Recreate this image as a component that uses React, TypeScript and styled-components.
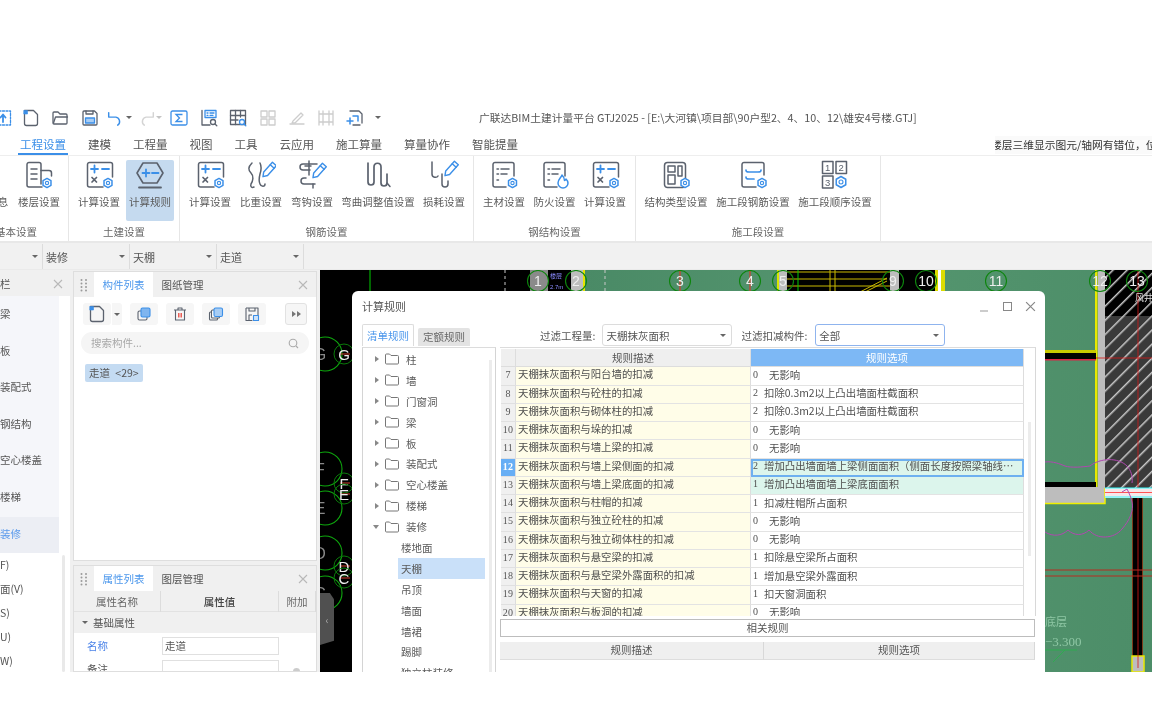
import React from 'react';
import styled, { createGlobalStyle } from 'styled-components';

const GRAY = '#5b626e';
const BLUE = '#3b8fe8';
const FONT = '"Noto Sans CJK SC", "Noto Sans", sans-serif';

const Global = createGlobalStyle`
  html, body { margin: 0; padding: 0; background: #fff; overflow: hidden; }
  * { box-sizing: border-box; }
`;

const Page = styled.div`
  width: 1152px; height: 721px; overflow: hidden; background: #fff;
  font-family: ${FONT}; color: #555; font-size: 10.5px;
  display: flex; flex-direction: column; filter: blur(0.35px);
`;
const TopBlank = styled.div`height: 105px; flex: none;`;
const TitleBar = styled.div`height: 25px; flex: none; display: flex; align-items: center; margin-left: -12px; white-space: nowrap;`;
const Slot = styled.div<{ $w: number }>`width: ${p => p.$w}px; flex: none; display: flex; justify-content: center; align-items: center;`;
const TinyCaret = styled.span<{ $ml?: number; $light?: boolean }>`
  width: 0; height: 0; flex: none; margin-left: ${p => p.$ml ?? 0}px;
  border-left: 3px solid transparent; border-right: 3px solid transparent;
  border-top: 3px solid ${p => (p.$light ? '#c4c4c4' : '#666')};
`;
const Title = styled.div`margin-left: 98px; font-size: 10.75px; color: #555; line-height: 25px;`;

const TabBar = styled.div`height: 26px; flex: none; display: flex; padding-left: 18px; gap: 18px; border-bottom: 1px solid #eee; white-space: nowrap;`;
const Tab = styled.div<{ $active?: boolean }>`
  font-size: 11.5px; line-height: 24px; padding: 2px 2px 0; height: 25px;
  color: ${p => (p.$active ? '#3b8fe8' : '#555')};
  border-bottom: 2px solid ${p => (p.$active ? '#3b8fe8' : 'transparent')};
`;
const Note = styled.div`
  margin-left: auto; width: 157px; height: 18px; margin-top: 6px; overflow: hidden; white-space: nowrap;
  font-size: 10.75px; line-height: 18px; color: #333; text-indent: -4px; background: #fafafa; flex: none;
`;

const Ribbon = styled.div`height: 85px; flex: none; display: flex; background: #fff;`;
const Group = styled.div<{ $w: number; $pl?: number; $gap?: number }>`
  width: ${p => p.$w}px; flex: none; border-right: 1px solid #e6e6e6; display: flex; flex-direction: column;
  & > div:first-child { padding-left: ${p => p.$pl ?? 0}px; gap: ${p => p.$gap ?? 0}px; }
`;
const GroupItems = styled.div`display: flex; height: 68px; padding-top: 4px;`;
const GroupLabel = styled.div<{ $left?: number }>`
  font-size: 10.5px; line-height: 16px; white-space: nowrap; text-align: ${p => (p.$left !== undefined ? 'left' : 'center')};
  margin-left: ${p => p.$left ?? 0}px; color: #666;
`;
const RibbonItem = styled.div<{ $w: number; $active?: boolean }>`
  width: ${p => p.$w}px; flex: none; height: 61px; display: flex; flex-direction: column; align-items: center;
  background: ${p => (p.$active ? '#c5daef' : 'transparent')}; border-radius: 2px; white-space: nowrap;
`;
const RibbonBlank = styled.div`width: 1px; height: 30px; flex: none;`;
const RibbonText = styled.span`font-size: 10.5px; line-height: 14px; margin-top: 5px; color: #5a5a5a;`;

const Strip = styled.div`height: 29px; flex: none; background: #f1f1f1; border-top: 2px solid #e8e8e8; display: flex; padding-top: 1px; border-bottom: 1px solid #eaeaea;`;
const StripCell = styled.div<{ $w: number }>`
  width: ${p => p.$w}px; flex: none; display: flex; align-items: center; justify-content: space-between;
  padding: 0 4px 0 3px; border-right: 1px solid #dcdcdc; font-size: 11px; color: #555;
`;

const Main = styled.div`height: 402px; flex: none; display: flex; background: #f0f0f0; overflow: hidden; gap: 3px;`;
const Sidebar = styled.div`width: 70px; flex: none; background: #fff; display: flex; flex-direction: column; position: relative; margin-top: 1px;`;
const SideHead = styled.div`height: 25px; flex: none; background: #f0f0f0; display: flex; align-items: center; justify-content: space-between; padding-right: 7px; font-size: 10.5px;`;
const SideList = styled.div`width: 59px; flex: none; background: #f5f6fa; display: flex; flex-direction: column; padding-top: 1px;`;
const SideItem = styled.div<{ $active?: boolean }>`
  height: 36.6px; line-height: 34.6px; font-size: 10.5px; white-space: nowrap; overflow: hidden;
  color: ${p => (p.$active ? '#5b9bec' : '#555')}; background: ${p => (p.$active ? '#eceef4' : 'transparent')};
`;
const SubList = styled.div`display: flex; flex-direction: column; position: relative;`;
const SubItem = styled.div`height: 24px; line-height: 24px; font-size: 10.5px; color: #555;`;
const SideScroll = styled.div`position: absolute; left: 62px; top: 284px; bottom: 0; width: 3px; background: #e9e9e9; border-radius: 2px;`;

const PanelCol = styled.div`width: 244px; flex: none; display: flex; flex-direction: column; gap: 4px; padding-top: 1px;`;
const Panel = styled.div<{ $h?: number }>`
  height: ${p => (p.$h ? `${p.$h}px` : 'auto')}; flex: ${p => (p.$h ? 'none' : 1)}; background: #fff;
  border: 1px solid #dedede; display: flex; flex-direction: column; overflow: hidden;
`;
const PanelHead = styled.div`height: 25px; flex: none; background: #f0f0f0; display: flex; align-items: stretch; padding-right: 8px;`;
const Grip = styled.div`width: 20px; flex: none; display: grid; place-items: center;`;
const PTab = styled.div<{ $active?: boolean }>`
  width: 59px; flex: none; text-align: center; line-height: 25px; font-size: 10.5px;
  background: ${p => (p.$active ? '#fff' : 'transparent')}; color: ${p => (p.$active ? '#4b97ec' : '#555')};
`;
const CloseX = styled.div`margin-left: auto; display: grid; place-items: center;`;
const PTools = styled.div`display: flex; gap: 8px; padding: 6px 9px 0; height: 28px; flex: none;`;
const PBtn = styled.div<{ $raised?: boolean; $auto?: boolean }>`
  width: ${p => (p.$raised ? 22 : 28)}px; height: 22px; background: #f6f6f6; border-radius: 3px; display: grid; place-items: center; flex: none;
  margin-left: ${p => (p.$auto ? 'auto' : 0)};
  border: ${p => (p.$raised ? '1px solid #e2e2e2' : 'none')};
`;
const SplitBtn = styled.div`display: flex; gap: 1px; flex: none;`;
const SplitCaret = styled.div`width: 10px; height: 22px; background: #f6f6f6; border-radius: 0 3px 3px 0; display: grid; place-items: center;`;
const Search = styled.div`margin: 7px 7px 0; height: 22px; border-radius: 11px; background: #f5f5f5; display: flex; align-items: center; justify-content: space-between; padding: 0 10px; color: #a8a8a8; font-size: 10.5px; flex: none; line-height: 20px;`;
const Chip = styled.div`margin: 10px 0 0 11px; align-self: flex-start; height: 18px; padding: 0 4px; border-radius: 2px; background: #c4dbf2; font-size: 10.5px; line-height: 17px; color: #555; white-space: nowrap; word-spacing: 3px;`;

const PropHead = styled.div`display: grid; grid-template-columns: 87px 118px 1fr; height: 21px; flex: none; background: #f0f0f0; border-bottom: 1px solid #e2e2e2;`;
const PropHeadCell = styled.div<{ $strong?: boolean }>`text-align: center; line-height: 21px; font-size: 10.5px; border-right: 1px solid #dcdcdc; color: ${p => (p.$strong ? '#444' : '#666')}; font-weight: ${p => (p.$strong ? 500 : 400)};`;
const PropSection = styled.div`height: 21px; flex: none; background: #f0f0f0; display: flex; align-items: center; gap: 5px; padding-left: 8px; font-size: 10.5px;`;
const PropRow = styled.div`display: grid; grid-template-columns: 88px 117px 1fr; height: 21px; flex: none; align-items: center; margin-top: 2px;`;
const PropName = styled.div<{ $blue?: boolean }>`padding-left: 13px; color: ${p => (p.$blue ? '#4b83e8' : '#555')}; font-size: 10.5px;`;
const PropInput = styled.div`height: 18px; border: 1px solid #e0e0e0; padding-left: 2px; line-height: 15px; font-size: 10.5px;`;
const Dot = styled.div`width: 7px; height: 7px; border-radius: 50%; background: #ccc; margin: 6px 0 0 14px;`;

const Canvas = styled.div`flex: 1; position: relative; overflow: hidden; background: #000; min-width: 0;`;
const CanvasArt = styled.svg`display: block; width: 832px; height: 402px;`;
const Handle = styled.div`
  position: absolute; left: 0; top: 323px; width: 14px; height: 52px; background: #505050;
  clip-path: polygon(0 0, 70% 0, 100% 12%, 100% 92%, 0 100%); display: grid; place-items: center; color: #aaa; font-size: 10px;
`;

const Dialog = styled.div`
  position: absolute; left: 32px; top: 21px; width: 693px; height: 400px; background: #fff; border-radius: 6px 6px 0 0;
  padding: 0 10px; display: flex; flex-direction: column;
`;
const DTitle = styled.div`height: 33px; flex: none; display: flex; align-items: center; justify-content: space-between; font-size: 11px; color: #555; padding-bottom: 3px;`;
const WinBtns = styled.div`display: flex; align-items: center; gap: 12px; margin-right: -1px;`;
const DBar = styled.div`height: 22px; flex: none; display: flex; align-items: flex-end;`;
const DTab = styled.div<{ $active?: boolean }>`
  height: ${p => (p.$active ? 22 : 18)}px; width: 52px; text-align: center; font-size: 10.5px; flex: none;
  line-height: ${p => (p.$active ? 22 : 18)}px; margin-right: ${p => (p.$active ? 4 : 0)}px; border-radius: 2px 2px 0 0;
  background: ${p => (p.$active ? '#fff' : '#e3e3e3')}; color: ${p => (p.$active ? '#4b97ec' : '#666')};
  border: ${p => (p.$active ? '1px solid #dcdcdc' : 'none')}; border-bottom: none;
`;
const FilterLabel = styled.div<{ $ml: number }>`margin-left: ${p => p.$ml}px; align-self: center; font-size: 10.5px; color: #555; white-space: nowrap; flex: none;`;
const Select = styled.div<{ $focus?: boolean; $ml: number }>`
  margin-left: ${p => p.$ml}px; width: 130px; height: 22px; flex: none; align-self: center; border-radius: 3px;
  border: 1px solid ${p => (p.$focus ? '#8fb4ee' : '#dcdcdc')};
  display: flex; align-items: center; justify-content: space-between; padding: 0 5px 0 3px; font-size: 10.5px; color: #555; background: #fff;
`;
const DBody = styled.div`flex: 1; display: flex; gap: 4px; min-height: 0; padding-top: 1px;`;
const Tree = styled.div`width: 134px; flex: none; border: 1px solid #d4d4d4; border-bottom: none; border-top: 1px solid #dcdcdc; position: relative; padding-top: 1px; overflow: hidden;`;
const TreeRow = styled.div<{ $sel?: boolean; $child?: boolean }>`
  height: 20.9px; display: flex; align-items: center; font-size: 10.5px; color: #5a5a5a; white-space: nowrap;
  margin-left: ${p => (p.$child ? 35 : 10)}px; width: ${p => (p.$child ? '87px' : 'auto')}; padding-left: ${p => (p.$child ? 3 : 0)}px;
  background: ${p => (p.$sel ? '#c9e0f9' : 'transparent')};
`;
const TreeCaret = styled.span<{ $open?: boolean }>`
  width: 0; height: 0; flex: none; margin-right: 6px;
  ${p => (p.$open
    ? 'border-left:3px solid transparent;border-right:3px solid transparent;border-top:4px solid #888;'
    : 'border-top:3px solid transparent;border-bottom:3px solid transparent;border-left:4px solid #888;margin-left:2px;')}
`;
const TreeName = styled.span`margin-left: 7px;`;
const TreeScroll = styled.div`position: absolute; right: 3px; top: 12px; bottom: 0; width: 3px; background: #ececec;`;

const RulesCol = styled.div`width: 536px; flex: none; display: flex; flex-direction: column; min-height: 0;`;
const GridBox = styled.div`height: 269px; flex: none; border-top: 1px solid #dcdcdc; border-right: 1px solid #d8d8d8; overflow: hidden; position: relative; padding-left: 1px; padding-top: 1px;`;
const RuleGrid = styled.div`display: grid; grid-template-columns: 15px 235px 273px; grid-auto-rows: 18.25px; width: 523px;`;
const Hd = styled.div<{ $blue?: boolean }>`
  background: ${p => (p.$blue ? '#7db8f5' : '#efefef')}; color: ${p => (p.$blue ? '#fff' : '#555')}; text-align: center; line-height: 17px;
  font-size: 10.5px; border-bottom: 1px solid #ddd; border-right: 1px solid #ddd;
`;
const Idx = styled.div<{ $sel?: boolean }>`
  background: ${p => (p.$sel ? '#67aef5' : '#f0f0f0')}; color: ${p => (p.$sel ? '#fff' : '#555')}; text-align: center;
  line-height: 15.5px; font-size: 10px; font-family: "Liberation Serif", serif; font-weight: ${p => (p.$sel ? 700 : 400)};
  border-bottom: 1px solid #e0e0e0; border-right: 1px solid #ddd; letter-spacing: .2px;
`;
const Desc = styled.div`background: #fffde8; padding-left: 2px; line-height: 14px; font-size: 10.4px; border-bottom: 1px solid #e3e3e3; border-right: 1px solid #ddd; white-space: nowrap; color: #4f4f4f;`;
const Opt = styled.div<{ $sel?: boolean; $tint?: boolean }>`
  background: ${p => (p.$sel || p.$tint ? '#dcf5ec' : '#fff')}; display: flex; align-items: center; font-size: 10.4px; white-space: nowrap; color: #4f4f4f;
  border-bottom: 1px solid #e3e3e3; border-right: 1px solid #ddd; overflow: hidden; padding-bottom: 3px;
  ${p => (p.$sel ? 'outline: 2px solid #6eb0f0; outline-offset: -2px; z-index: 1;' : '')}
`;
const OptCode = styled.span<{ $zero?: boolean }>`width: ${p => (p.$zero ? 18 : 13)}px; padding-left: 2px; flex: none; font-family: "Liberation Serif", serif; font-size: 10px;`;
const GridScroll = styled.div`position: absolute; right: 4px; top: 74px; height: 134px; width: 3px; background: #ececec;`;
const Related = styled.div`height: 18px; flex: none; margin-top: 3px; width: 535px; border: 1px solid #bdbdbd; background: #fff; text-align: center; line-height: 16px; font-size: 10.5px; color: #555;`;
const LowerHead = styled.div`display: grid; grid-template-columns: 264px 271px; margin-top: 5px; flex: none; width: 535px;`;
const LowerCell = styled.div`height: 18px; background: #efefef; text-align: center; line-height: 16px; font-size: 10.5px; border-right: 1px solid #d8d8d8; border-bottom: 1px solid #ddd;`;

/* ---------- icons ---------- */
const Gear = ({ x, y, r = 4.6 }: { x: number; y: number; r?: number }) => {
  const pts = Array.from({ length: 6 }, (_, i) => {
    const a = (Math.PI / 3) * i + Math.PI / 6;
    return `${(x + r * Math.cos(a)).toFixed(2)},${(y + r * Math.sin(a)).toFixed(2)}`;
  }).join(' ');
  return (
    <g>
      <polygon points={pts} fill="#fff" stroke={BLUE} strokeWidth="1.5" strokeLinejoin="round" />
      <circle cx={x} cy={y} r={r * 0.36} fill="none" stroke={BLUE} strokeWidth="1.1" />
    </g>
  );
};
const Pencil = ({ x, y }: { x: number; y: number }) => (
  <g transform={`translate(${x} ${y}) rotate(42)`} fill="#fff" stroke={BLUE} strokeWidth="1.4" strokeLinejoin="round">
    <path d="M-2.6 -8h5.2v13L0 9l-2.6-4z" />
    <path d="M-2.6 -4.8h5.2" />
  </g>
);
const Ico = ({ children, size = 30, box = 30 }: { children: React.ReactNode; size?: number; box?: number }) => (
  <svg width={size} height={size} viewBox={`0 0 ${box} ${box}`} fill="none" stroke={GRAY} strokeWidth="1.5" strokeLinecap="round" strokeLinejoin="round">
    {children}
  </svg>
);
const CalcIco = () => (
  <Ico>
    <path d="M19 27H5.5a2 2 0 0 1-2-2V4.5a2 2 0 0 1 2-2h21a2 2 0 0 1 2 2V17" />
    <path d="M7 9h7M10.5 5.500v7M18 9h7" stroke={BLUE} strokeWidth="1.8" />
    <path d="M8 17.500l4.500 4.500M12.500 17.500L8 22" strokeWidth="1.7" />
    <Gear x={24} y={23} />
  </Ico>
);
const RuleIco = () => (
  <Ico>
    <path d="M8 3h14l6 10-6 10H8L2 13z" strokeWidth="1.6" />
    <path d="M7.500 13h7M11 9.500v7M17 13h6.500" stroke={BLUE} strokeWidth="1.8" />
    <path d="M4 27.500h22" strokeWidth="1.8" />
  </Ico>
);
const FloorIco = () => (
  <Ico>
    <path d="M18 27H5a2 2 0 0 1-2-2V4.500a2 2 0 0 1 2-2h10a2 2 0 0 1 2 2V24" />
    <path d="M17 10.500h8a2.500 2.500 0 0 1 2.500 2.500V16" />
    <path d="M7 9h6M7 14h6M7 19h6" />
    <Gear x={23} y={23} />
  </Ico>
);
const WeightIco = () => (
  <Ico>
    <path d="M6 3C2 7 2 10 5 13c3 3 2 8 0 11-1 3 1 4 3 3" />
    <path d="M14 3c2 4 1 8 0 11-1 4-1 8 0 10 1 3 5 3 5 0" />
    <Pencil x={23} y={10} />
  </Ico>
);
const HookIco = () => (
  <Ico>
    <path d="M20 4H6C2 4 2 10 6 10h7M9 18H7c-4 0-4 6 0 6h11" />
    <path d="M12 1v14M8 6h6" />
    <path d="M16 24v4" />
    <Pencil x={22} y={11} />
  </Ico>
);
const BendIco = () => (
  <Ico>
    <path d="M5 3v19c0 4 6 4 6 0V7c0-5 7-5 7 0v16c0 4 6 4 6 0V14" strokeWidth="1.7" />
    <path d="M24 23l3 3.500" />
  </Ico>
);
const LossIco = () => (
  <Ico>
    <path d="M3 2v12c0 4 5 4 6 2" />
    <path d="M13 14v10c0 4 6 4 6 0v-3" />
    <Pencil x={22} y={9} />
  </Ico>
);
const DocLines = ({ fire }: { fire?: boolean }) => (
  <Ico>
    <path d="M17 27H6a2 2 0 0 1-2-2V4.500a2 2 0 0 1 2-2h17a2 2 0 0 1 2 2V16" />
    <path d="M8 9h1.500M12 9h8M8 14h1.500M12 14h6M8 20h1.500" />
    {fire
      ? <path d="M22 15c-1 3-4 4-4 8a5 5 0 0 0 10 0c0-2-1-3-2-4-.5 1-1 1.500-1.500 1.500 0-2-1-4-2.500-5.500z" fill="#fff" stroke={BLUE} />
      : <Gear x={23.5} y={23} />}
  </Ico>
);
const MaterialIco = () => <DocLines />;
const FireIco = () => <DocLines fire />;
const StructIco = () => (
  <Ico>
    <rect x="3.500" y="2.500" width="21" height="25" rx="3" />
    <rect x="7" y="6" width="7" height="6" />
    <rect x="17" y="6" width="4" height="10" />
    <rect x="7" y="15" width="7" height="9" />
    <Gear x={24} y={23} />
  </Ico>
);
const SegRebarIco = () => (
  <Ico>
    <path d="M18 27H6a2 2 0 0 1-2-2V4.500a2 2 0 0 1 2-2h18a2 2 0 0 1 2 2V15" />
    <path d="M8 10c0 2 1 2 3 2h9c2 0 3 0 3-2M8 17c0 2 1 2 3 2h5" stroke={BLUE} strokeWidth="1.7" />
    <Gear x={24} y={23} />
  </Ico>
);
const NumBox = ({ x, y, t }: { x: number; y: number; t: string }) => (
  <g>
    <rect x={x} y={y} width="10.500" height="12" stroke={GRAY} strokeWidth="1.500" />
    <text x={x + 5.2} y={y + 9.5} textAnchor="middle" fontSize="9.500" fontFamily="Liberation Sans" fill={GRAY} stroke="none">{t}</text>
  </g>
);
const SeqIco = () => (
  <Ico>
    <NumBox x={2.5} y={1.5} t="1" />
    <NumBox x={16} y={1.5} t="2" />
    <NumBox x={2.5} y={16} t="3" />
    <Gear x={21} y={22} r={5.5} />
  </Ico>
);

const tb = (c: React.ReactNode, faded?: boolean) => (
  <svg width="20" height="20" viewBox="0 0 20 20" fill="none" stroke={faded ? '#cdcdcd' : GRAY} strokeWidth="1.300" strokeLinecap="round" strokeLinejoin="round">{c}</svg>
);
const TImport = () => tb(<><rect x="2.500" y="3" width="15" height="14" stroke={BLUE} strokeDasharray="2 1.500" /><path d="M10 14V7M7.500 9.500L10 6.500l2.500 3" stroke={BLUE} strokeWidth="1.800" /></>);
const TNew = () => tb(<><path d="M3.500 2.500h9l4 4v9a2 2 0 0 1-2 2h-9a2 2 0 0 1-2-2z" /><path d="M3 2.500h3.500V6H3z" fill={BLUE} stroke={BLUE} strokeWidth=".6" /></>);
const TOpen = () => tb(<><path d="M3 15V5a1 1 0 0 1 1-1h4l2 2h6a1 1 0 0 1 1 1v8a1 1 0 0 1-1 1H4a1 1 0 0 1-1-1z" /><path d="M3.500 15l2-6h12" /></>);
const TSave = () => tb(<><path d="M3 4a1 1 0 0 1 1-1h10.500L17 5.500V16a1 1 0 0 1-1 1H4a1 1 0 0 1-1-1z" /><path d="M6 3v3h7V3" /><rect x="5.500" y="10" width="9" height="5" fill="#a9cdf3" stroke={BLUE} /></>);
const TUndo = ({ f }: { f?: boolean }) => <svg width="18" height="18" viewBox="0 0 20 20" fill="none" stroke={f ? '#d4d4d4' : BLUE} strokeWidth="1.600" strokeLinecap="round" strokeLinejoin="round"><path d="M3 9h8a5 5 0 0 1 2 9M3 4v5h5" transform={f ? 'matrix(-1 0 0 1 20 0)' : undefined} /></svg>;
const TSigma = () => <svg width="20" height="20" viewBox="0 0 20 20" fill="none" stroke={BLUE} strokeWidth="1.300"><rect x="2" y="3" width="16" height="14" rx="1.500" /><path d="M13.500 6.500H7l3.500 3.500L7 13.500h6.500" /></svg>;
const TReport = () => tb(<><path d="M3 2.500V17h8" /><rect x="6" y="2.500" width="11" height="7" stroke={BLUE} /><path d="M8 5h1M11 5h4M8 7.300h1M11 7.300h3" stroke={BLUE} /><circle cx="14" cy="14" r="2.500" /><path d="M16 16l1.800 1.800" /></>);
const TGrid = () => tb(<><rect x="2.500" y="2.500" width="15" height="14" stroke={GRAY} /><path d="M7.500 2.500v14M12.500 2.500V9M2.500 7.500h15M2.500 12H10" /><circle cx="14" cy="14" r="2.500" fill="#fff" stroke={BLUE} /><path d="M16 16l1.800 1.800" stroke={BLUE} /></>);
const TFade1 = () => tb(<><rect x="3" y="3" width="6" height="6" /><rect x="11" y="3" width="6" height="6" /><rect x="3" y="11" width="6" height="6" /><rect x="11" y="11" width="6" height="6" /></>, true);
const TFade2 = () => tb(<><path d="M3 16h14" /><path d="M6 13l8-8 2 2-8 8H5z" /></>, true);
const TFade3 = () => tb(<><path d="M3 3v14M17 3v14M7 3v14M13 3v14M3 6h14M3 14h14" /></>, true);
const TAdd = () => tb(<><path d="M5 3h9l3 3v9M15 17H8" stroke={GRAY} /><path d="M2 13h6M5 10v6M8 8h5v5" stroke={BLUE} strokeWidth="1.500" /></>);

const XIcon = ({ c = '#b8b8b8', s = 10 }: { c?: string; s?: number }) => (
  <svg width={s} height={s} viewBox="0 0 10 10" stroke={c} strokeWidth="1.100"><path d="M1 1l8 8M9 1l-8 8" /></svg>
);
const Dots = () => (
  <svg width="8" height="14" viewBox="0 0 8 14" fill="#9a9a9a"><circle cx="1.500" cy="2" r="1" /><circle cx="6" cy="2" r="1" /><circle cx="1.500" cy="5.500" r="1" /><circle cx="6" cy="5.500" r="1" /><circle cx="1.500" cy="9" r="1" /><circle cx="6" cy="9" r="1" /><circle cx="1.500" cy="12.500" r="1" /><circle cx="6" cy="12.500" r="1" /></svg>
);
const FolderIco = () => (
  <svg width="14" height="12" viewBox="0 0 14 12" fill="none" stroke="#777" strokeWidth="1"><path d="M.5 2a1 1 0 0 1 1-1h3l1.500 1.500h6.500a1 1 0 0 1 1 1v6.500a1 1 0 0 1-1 1h-11a1 1 0 0 1-1-1z" /></svg>
);
const PIco = ({ children }: { children: React.ReactNode }) => (
  <svg width="18" height="18" viewBox="0 0 18 18" fill="none" stroke={GRAY} strokeWidth="1.100" strokeLinejoin="round">{children}</svg>
);

/* ---------- data ---------- */
const ribbon: { w: number; pl: number; gap: number; label: string; left?: number; items: { w: number; t: string; I: React.ComponentType | null; active?: boolean }[] }[] = [
  { w: 69, pl: 0, gap: 8, label: '基本设置', left: -5, items: [{ w: 6, t: '息', I: null }, { w: 50, t: '楼层设置', I: FloorIco }] },
  { w: 111, pl: 5, gap: 2, label: '土建设置', items: [{ w: 50, t: '计算设置', I: CalcIco }, { w: 48, t: '计算规则', I: RuleIco, active: true }] },
  { w: 294, pl: 5, gap: 1, label: '钢筋设置', items: [{ w: 50, t: '计算设置', I: CalcIco }, { w: 50, t: '比重设置', I: WeightIco }, { w: 50, t: '弯钩设置', I: HookIco }, { w: 80, t: '弯曲调整值设置', I: BendIco }, { w: 50, t: '损耗设置', I: LossIco }] },
  { w: 162, pl: 5, gap: 0.5, label: '钢结构设置', items: [{ w: 50, t: '主材设置', I: MaterialIco }, { w: 50, t: '防火设置', I: FireIco }, { w: 50, t: '计算设置', I: CalcIco }] },
  { w: 245, pl: 4, gap: 0, label: '施工段设置', items: [{ w: 72, t: '结构类型设置', I: StructIco }, { w: 82, t: '施工段钢筋设置', I: SegRebarIco }, { w: 82, t: '施工段顺序设置', I: SeqIco }] },
];
const P = '天棚抹灰面积与';
const NONE = '无影响';
const COL = '扣除0.3m2以上凸出墙面柱截面积';
const rows: [number, string, string, string][] = [
  [7, '阳台墙的扣减', '0', NONE], [8, '砼柱的扣减', '2', COL], [9, '砌体柱的扣减', '2', COL], [10, '垛的扣减', '0', NONE],
  [11, '墙上梁的扣减', '0', NONE], [12, '墙上梁侧面的扣减', '2', '增加凸出墙面墙上梁侧面面积（侧面长度按照梁轴线…'],
  [13, '墙上梁底面的扣减', '1', '增加凸出墙面墙上梁底面面积'], [14, '柱帽的扣减', '1', '扣减柱帽所占面积'], [15, '独立砼柱的扣减', '0', NONE],
  [16, '独立砌体柱的扣减', '0', NONE], [17, '悬空梁的扣减', '1', '扣除悬空梁所占面积'], [18, '悬空梁外露面积的扣减', '1', '增加悬空梁外露面积'],
  [19, '天窗的扣减', '1', '扣天窗洞面积'], [20, '板洞的扣减', '0', NONE],
];
const folders = ['柱', '墙', '门窗洞', '梁', '板', '装配式', '空心楼盖', '楼梯'];
const children = ['楼地面', '天棚', '吊顶', '墙面', '墙裙', '踢脚', '独立柱装修'];
const axes: [string, number][] = [['1', 218], ['2', 256], ['3', 360], ['4', 430], ['5', 463], ['9', 573], ['10', 606], ['11', 676], ['12', 780], ['13', 817]];
const bigBubbles: [number, string][] = [[84, 'G'], [199, 'F'], [238, 'E'], [283, 'D'], [323, 'C']];
const smallBubbles: [number, string][] = [[84, 'G'], [213, 'F'], [224, 'E'], [296, 'D'], [308, 'C']];

/* Canvas coordinates: x = page x − 320, y = page y − 270 */
const CanvasDrawing = () => (
  <CanvasArt viewBox="0 0 832 402" role="img" aria-label="drawing">
    <defs>
      <pattern id="hatch" width="10" height="10" patternUnits="userSpaceOnUse" patternTransform="rotate(45)">
        <rect x="0" y="0" width="1.500" height="10" fill="#c9c9c9" />
      </pattern>
      <linearGradient id="grn" x1="0" x2="1" y1="0" y2="0">
        <stop offset="0" stopColor="#4a8a66" /><stop offset=".5" stopColor="#55966f" /><stop offset="1" stopColor="#4c8d68" />
      </linearGradient>
    </defs>
    <rect width="832" height="402" fill="#000" />
    <rect x="263" y="0" width="569" height="402" fill="url(#grn)" />
    <rect x="210" y="0" width="18" height="22" fill="#8a8a8a" />
    <rect x="251" y="0" width="12" height="22" fill="#bdbdbd" />
    <rect x="263" y="0" width="2" height="22" fill="#e5e500" />
    <rect x="457" y="0" width="2" height="22" fill="#d8e800" />
    <rect x="459" y="0" width="8" height="22" fill="#bdbdbd" />
    <rect x="467" y="0" width="103" height="22" fill="#000" />
    <path d="M467 2h103M467 16h103M510 0v22M515 0v22M467 9h100" stroke="#c9b900" strokeWidth="1" />
    <path d="M478 0v22" stroke="#0c0" />
    <path d="M540 22l27-14M545 22l22-11" stroke="#c9b900" />
    <rect x="570" y="0" width="9" height="22" fill="#bdbdbd" />
    <rect x="579" y="0" width="36" height="22" fill="#000" />
    <rect x="615" y="0" width="10" height="22" fill="#dcdc00" />
    <rect x="618" y="0" width="3" height="22" fill="#fff" />
    <text x="230" y="8" fontSize="6" fill="#8c8cff" fontFamily="Noto Sans CJK SC">楼层</text>
    <text x="230" y="19" fontSize="6" fill="#8c8cff" fontFamily="Liberation Sans">2.7m</text>
    <path d="M185 0v22M285 0v22" stroke="#c8c8c8" strokeDasharray="3 3" />
    <path d="M50 0v21" stroke="#0c0" strokeWidth="1" />

    {/* right side of the drawing */}
    <rect x="775" y="0" width="2.500" height="218" fill="#e8e800" />
    <rect x="778" y="0" width="7" height="233" fill="#bdbdbd" />
    <rect x="785" y="0" width="47" height="46" fill="#000" />
    <rect x="785" y="46" width="47" height="172" fill="#3a3a3a" />
    <rect x="785" y="0" width="47" height="218" fill="url(#hatch)" />
    <rect x="725" y="80" width="51" height="3" fill="#c8c800" />
    <rect x="725" y="83" width="51" height="6" fill="#000" />
    <rect x="725" y="89" width="51" height="1.500" fill="#d24" />
    <path d="M776 88h56M818 0v218" stroke="#d81818" strokeWidth=".8" />
    <rect x="725" y="212" width="51" height="5" fill="#000" />
    <rect x="725" y="217" width="60" height="16" fill="#bdbdbd" />
    <path d="M725 233.500h60V218" stroke="#f0f000" strokeWidth="1.500" fill="none" />
    <rect x="785" y="218" width="47" height="10" fill="#f4e8ea" />
    <path d="M785 218h47M785 227h47" stroke="#3ff" strokeWidth="1" />
    <path d="M785 222.500h47" stroke="#f55" strokeWidth="1" />
    <rect x="813" y="228" width="9" height="158" fill="#000" />
    <path d="M812.500 228v158M822.500 228v158" stroke="#7b3a1a" strokeWidth="1" />
    <rect x="812" y="386" width="12" height="16" fill="#bdbdbd" stroke="#e8e800" strokeWidth="1.500" />
    <path d="M725 300h107M725 306h107" stroke="#b82c20" strokeWidth="1.200" />
    <path d="M818 228v170" stroke="#d81818" strokeWidth=".8" />
    <path d="M725 262c8 5 17 4 23-2 6 6 15 6 21 0 8 10 25 9 33-1 8-9 12-19 10-27-1-5-3-9-5-13l-5 3" stroke="#b048b0" strokeWidth="1" fill="none" />
    <path d="M725 192c8-1 15 2 20 4 6 2 18 1 25 0 10-8 28-9 37 0 4 4 6 11 5 17" stroke="#b048b0" strokeWidth="1" fill="none" />
    <text x="725" y="356" fontSize="11" fill="#8fc7a5" fontFamily="Noto Sans CJK SC">底层</text>
    <text x="725" y="376" fontSize="13" fill="#8fc7a5" fontFamily="Liberation Serif">−3.300</text>
    <path d="M725 380h32M733 392l12-12" stroke="#27b34a" strokeWidth=".8" fill="none" />

    {/* axis bubbles along the top */}
    {axes.map(([t, x]) => (
      <g key={t}>
        <path d={`M${x} -1V22`} stroke={x > 340 && x < 440 ? '#d43c2c' : 'none'} strokeWidth="1.200" />
        <circle cx={x} cy="11" r="10.500" fill="none" stroke="#0d850d" strokeWidth="1.100" />
        <text x={x} y="16" textAnchor="middle" fontSize="14" fill="#eee" fontFamily="Liberation Sans">{t}</text>
      </g>
    ))}
    <text x="815" y="31" fontSize="9" fill="#ddd" fontFamily="Noto Sans CJK SC">风井</text>

    {/* axis bubbles on the left */}
    {bigBubbles.map(([y, t]) => (
      <g key={y}>
        <circle cx={5} cy={y} r="17" fill="none" stroke="#0ea80e" strokeWidth="1.100" />
        <text x={0} y={y + 6} textAnchor="middle" fontSize="16" fill="#888" fontFamily="Liberation Sans">{t}</text>
      </g>
    ))}
    {smallBubbles.map(([y, t]) => (
      <g key={y}>
        <path d={`M30 ${y}h-10`} stroke="#d43c2c" strokeWidth="1" />
        <circle cx={24} cy={y} r="10" fill="none" stroke="#0a7a0a" strokeWidth="1" />
        <text x={24} y={y + 6} textAnchor="middle" fontSize="15" fill="#eee" fontFamily="Liberation Sans">{t}</text>
      </g>
    ))}
  </CanvasArt>
);

export default function App() {
  return (
    <Page>
      <Global />
      <TopBlank />
      <TitleBar>
        <Slot $w={30}><TImport /></Slot>
        <Slot $w={26}><TNew /></Slot>
        <Slot $w={32}><TOpen /></Slot>
        <Slot $w={28}><TSave /></Slot>
        <Slot $w={22}><TUndo /></Slot>
        <TinyCaret />
        <Slot $w={30}><TUndo f /></Slot>
        <TinyCaret $ml={-6} $light />
        <Slot $w={34}><TSigma /></Slot>
        <Slot $w={26}><TReport /></Slot>
        <Slot $w={32}><TGrid /></Slot>
        <Slot $w={28}><TFade1 /></Slot>
        <Slot $w={30}><TFade2 /></Slot>
        <Slot $w={28}><TFade3 /></Slot>
        <Slot $w={30}><TAdd /></Slot>
        <TinyCaret $ml={5} />
        <Title>广联达BIM土建计量平台 GTJ2025 - [E:\大河镇\项目部\90户型2、4、10、12\雄安4号楼.GTJ]</Title>
      </TitleBar>
      <TabBar>
        {['工程设置', '建模', '工程量', '视图', '工具', '云应用', '施工算量', '算量协作', '智能提量'].map((t, i) => (
          <Tab key={t} $active={i === 0}>{t}</Tab>
        ))}
        <Note>楼层三维显示图元/轴网有错位，位置</Note>
      </TabBar>
      <Ribbon>
        {ribbon.map(g => (
          <Group key={g.label} $w={g.w} $pl={g.pl} $gap={g.gap}>
            <GroupItems>
              {g.items.map((it, i) => (
                <RibbonItem key={i} $w={it.w} $active={!!it.active}>
                  {it.I ? <it.I /> : <RibbonBlank />}
                  <RibbonText>{it.t}</RibbonText>
                </RibbonItem>
              ))}
            </GroupItems>
            <GroupLabel $left={g.left}>{g.label}</GroupLabel>
          </Group>
        ))}
      </Ribbon>
      <Strip>
        <StripCell $w={43}><span /><TinyCaret /></StripCell>
        <StripCell $w={87}>装修<TinyCaret /></StripCell>
        <StripCell $w={87}>天棚<TinyCaret /></StripCell>
        <StripCell $w={87}>走道<TinyCaret /></StripCell>
      </Strip>
      <Main>
        <Sidebar>
          <SideHead>栏<XIcon /></SideHead>
          <SideList>
            {['梁', '板', '装配式', '钢结构', '空心楼盖', '楼梯'].map(t => <SideItem key={t}>{t}</SideItem>)}
            <SideItem $active>装修</SideItem>
          </SideList>
          <SubList>
            {['F)', '面(V)', 'S)', 'U)', 'W)'].map(t => <SubItem key={t}>{t}</SubItem>)}
          </SubList>
          <SideScroll />
        </Sidebar>
        <PanelCol>
          <Panel>
            <PanelHead>
              <Grip><Dots /></Grip>
              <PTab $active>构件列表</PTab>
              <PTab>图纸管理</PTab>
              <CloseX><XIcon /></CloseX>
            </PanelHead>
            <PTools>
              <SplitBtn>
                <PBtn><TNew /></PBtn>
                <SplitCaret><TinyCaret /></SplitCaret>
              </SplitBtn>
              <PBtn><PIco><rect x="3" y="6" width="9" height="9" rx="1.500" /><rect x="6" y="3" width="9" height="9" rx="1.500" fill="#7fb5ef" stroke={BLUE} /></PIco></PBtn>
              <PBtn><PIco><path d="M3 5h12M7 5V3h4v2M4.500 5v10h9V5" /><path d="M7.800 8v4.500M10.200 8v4.500" stroke="#e8433a" strokeWidth="1.300" /></PIco></PBtn>
              <PBtn><PIco><rect x="2.500" y="7" width="8" height="8" rx="1" /><rect x="4.500" y="5" width="8" height="8" rx="1" fill="#fff" /><rect x="7" y="3" width="8.500" height="8.500" rx="1.500" fill="#a7cdf5" stroke={BLUE} /></PIco></PBtn>
              <PBtn><PIco><path d="M3 3h12v7M9 15.500H3zM3 3v12.500M6 3v3h6V3M6 15v-5h3" /><rect x="10.500" y="10.500" width="5" height="5" stroke={BLUE} fill="#cfe3f9" /></PIco></PBtn>
              <PBtn $raised $auto>
                <svg width="9" height="6" viewBox="0 0 9 6" fill="#777"><path d="M0 0l4 3-4 3zM5 0l4 3-4 3z" /></svg>
              </PBtn>
            </PTools>
            <Search>
              搜索构件...
              <svg width="11" height="11" viewBox="0 0 11 11" fill="none" stroke="#aaa" strokeWidth="1.100"><circle cx="5" cy="5" r="3.800" /><path d="M8 8l2 2" /></svg>
            </Search>
            <Chip>走道 &lt;29&gt;</Chip>
          </Panel>
          <Panel $h={107}>
            <PanelHead>
              <Grip><Dots /></Grip>
              <PTab $active>属性列表</PTab>
              <PTab>图层管理</PTab>
              <CloseX><XIcon /></CloseX>
            </PanelHead>
            <PropHead>
              <PropHeadCell>属性名称</PropHeadCell>
              <PropHeadCell $strong>属性值</PropHeadCell>
              <PropHeadCell>附加</PropHeadCell>
            </PropHead>
            <PropSection><TinyCaret />基础属性</PropSection>
            <PropRow>
              <PropName $blue>名称</PropName>
              <PropInput>走道</PropInput>
            </PropRow>
            <PropRow>
              <PropName>备注</PropName>
              <PropInput />
              <Dot />
            </PropRow>
          </Panel>
        </PanelCol>
        <Canvas>
          <CanvasDrawing />
          <Handle>‹</Handle>
          <Dialog>
            <DTitle>
              计算规则
              <WinBtns>
                <svg width="11" height="11" viewBox="0 0 11 11" stroke="#999" strokeWidth="1"><path d="M1 10h8" /></svg>
                <svg width="11" height="11" viewBox="0 0 11 11" fill="none" stroke="#888" strokeWidth="1"><rect x="1.500" y="1.500" width="8" height="8" /></svg>
                <XIcon c="#888" s={11} />
              </WinBtns>
            </DTitle>
            <DBar>
              <DTab $active>清单规则</DTab>
              <DTab>定额规则</DTab>
              <FilterLabel $ml={70}>过滤工程量:</FilterLabel>
              <Select $ml={7}>天棚抹灰面积<TinyCaret /></Select>
              <FilterLabel $ml={9}>过滤扣减构件:</FilterLabel>
              <Select $ml={8} $focus>全部<TinyCaret /></Select>
            </DBar>
            <DBody>
              <Tree>
                {folders.map(f => (
                  <TreeRow key={f}><TreeCaret /><FolderIco /><TreeName>{f}</TreeName></TreeRow>
                ))}
                <TreeRow><TreeCaret $open /><FolderIco /><TreeName>装修</TreeName></TreeRow>
                {children.map(c => <TreeRow key={c} $child $sel={c === '天棚'}>{c}</TreeRow>)}
                <TreeScroll />
              </Tree>
              <RulesCol>
                <GridBox>
                  <RuleGrid>
                    <Hd />
                    <Hd>规则描述</Hd>
                    <Hd $blue>规则选项</Hd>
                    {rows.map(([n, d, c, o]) => (
                      <React.Fragment key={n}>
                        <Idx $sel={n === 12}>{n}</Idx>
                        <Desc>{P + d}</Desc>
                        <Opt $sel={n === 12} $tint={n === 13}>
                          <OptCode $zero={c === '0'}>{c}</OptCode>{o}
                        </Opt>
                      </React.Fragment>
                    ))}
                  </RuleGrid>
                  <GridScroll />
                </GridBox>
                <Related>相关规则</Related>
                <LowerHead>
                  <LowerCell>规则描述</LowerCell>
                  <LowerCell>规则选项</LowerCell>
                </LowerHead>
              </RulesCol>
            </DBody>
          </Dialog>
        </Canvas>
      </Main>
    </Page>
  );
}
